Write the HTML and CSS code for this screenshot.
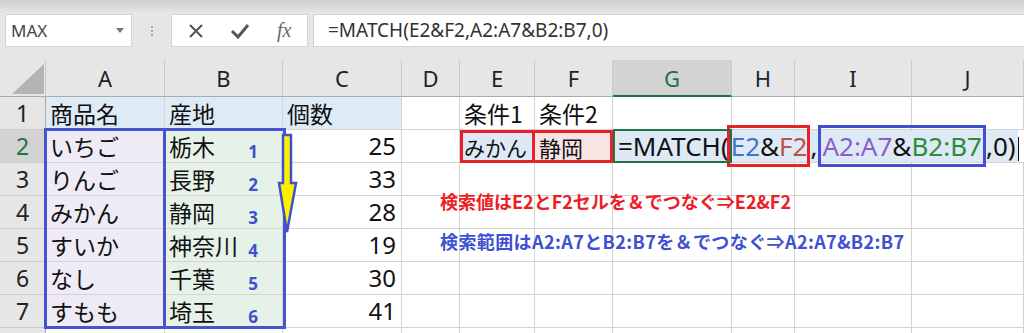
FILE: index.html
```html
<!DOCTYPE html>
<html lang="ja">
<head>
  <meta charset="UTF-8" />
  <meta name="viewport" content="width=device-width, initial-scale=1.0"/>
  <title>MATCH 複数条件</title>
  <link rel="stylesheet" href="styles.css">
</head>
<body>

  <div class="toolbar">
    <div class="bar-row">
      <div class="namebox">
        <span>MAX</span>
        <span class="drop"></span>
      </div>
      <div class="grip"><i></i><i></i><i></i></div>
      <div class="fxbox">
        <svg width="16" height="16" viewBox="0 0 16 16"><path d="M2 2 L14 14 M14 2 L2 14" stroke="#555" stroke-width="2" fill="none"/></svg>
        <svg width="20" height="16" viewBox="0 0 20 16"><path d="M2 8 L8 14 L18 2" stroke="#555" stroke-width="3" fill="none"/></svg>
        <span class="fx">fx</span>
      </div>
      <div class="formula-input">=MATCH(E2&amp;F2,A2:A7&amp;B2:B7,0)</div>
    </div>
  </div>

  <div class="sheet">
    <div class="grid">
      <!-- column headers -->
      <div class="hd corner"></div>
      <div class="hd">A</div>
      <div class="hd">B</div>
      <div class="hd">C</div>
      <div class="hd">D</div>
      <div class="hd">E</div>
      <div class="hd">F</div>
      <div class="hd active-col">G</div>
      <div class="hd">H</div>
      <div class="hd">I</div>
      <div class="hd">J</div>

      <!-- row 1 -->
      <div class="rh">1</div>
      <div class="c head-fill">商品名</div>
      <div class="c head-fill">産地</div>
      <div class="c head-fill">個数</div>
      <div class="c"></div>
      <div class="c">条件1</div>
      <div class="c">条件2</div>
      <div class="c"></div>
      <div class="c"></div>
      <div class="c"></div>
      <div class="c"></div>

      <!-- row 2 -->
      <div class="rh active-row">2</div>
      <div class="c fruit">いちご</div>
      <div class="c area">栃木<b>1</b></div>
      <div class="c num">25</div>
      <div class="c"></div>
      <div class="c cond1">みかん</div>
      <div class="c cond2">静岡</div>
      <div class="c editing">
        <div class="edit-fill">=MATCH(<span class="key"><span class="ref-e">E2</span>&amp;<span class="ref-f">F2</span></span>,<span class="range"><span class="ref-a">A2:A7</span>&amp;<span class="ref-b">B2:B7</span></span>,0)<span class="caret"></span></div>
      </div>

      <!-- row 3 -->
      <div class="rh">3</div>
      <div class="c fruit">りんご</div>
      <div class="c area">長野<b>2</b></div>
      <div class="c num">33</div>
      <div class="c"></div><div class="c"></div><div class="c"></div><div class="c"></div><div class="c"></div><div class="c"></div><div class="c"></div>

      <!-- row 4 -->
      <div class="rh">4</div>
      <div class="c fruit">みかん</div>
      <div class="c area">静岡<b>3</b></div>
      <div class="c num">28</div>
      <div class="c"></div><div class="c"></div><div class="c"></div><div class="c"></div><div class="c"></div><div class="c"></div><div class="c"></div>

      <!-- row 5 -->
      <div class="rh">5</div>
      <div class="c fruit">すいか</div>
      <div class="c area">神奈川<b>4</b></div>
      <div class="c num">19</div>
      <div class="c"></div><div class="c"></div><div class="c"></div><div class="c"></div><div class="c"></div><div class="c"></div><div class="c"></div>

      <!-- row 6 -->
      <div class="rh">6</div>
      <div class="c fruit">なし</div>
      <div class="c area">千葉<b>5</b></div>
      <div class="c num">30</div>
      <div class="c"></div><div class="c"></div><div class="c"></div><div class="c"></div><div class="c"></div><div class="c"></div><div class="c"></div>

      <!-- row 7 -->
      <div class="rh">7</div>
      <div class="c fruit">すもも</div>
      <div class="c area">埼玉<b>6</b></div>
      <div class="c num">41</div>
      <div class="c"></div><div class="c"></div><div class="c"></div><div class="c"></div><div class="c"></div><div class="c"></div><div class="c"></div>

      <!-- row 8 (cut off) -->
      <div class="rh"></div>
      <div class="c"></div><div class="c"></div><div class="c"></div><div class="c"></div><div class="c"></div><div class="c"></div><div class="c"></div><div class="c"></div><div class="c"></div><div class="c"></div>
    </div>

    <!-- drawn shapes on top of the sheet -->
    <div class="range-box"></div>
    <div class="range-split"></div>
    <svg class="arrow" width="22" height="104" viewBox="0 0 22 104">
      <path d="M6 2 H14 V50 H19 L10 99 L2 50 H6 Z" fill="#fff000" stroke="#4050d0" stroke-width="2.5" stroke-linejoin="miter"/>
    </svg>
    <p class="note red">検索値はE2とF2セルを＆でつなぐ⇒E2&amp;F2</p>
    <p class="note blue">検索範囲はA2:A7とB2:B7を＆でつなぐ⇒A2:A7&amp;B2:B7</p>
  </div>

</body>
</html>
```

FILE: styles.css
```css
body {
  margin: 0;
  width: 1024px;
  height: 333px;
  overflow: hidden;
  background: #fff;
  font-family: "Noto Sans", "Noto Sans CJK JP", sans-serif;
}

/* formula bar */
.toolbar {
  height: 60px;
  background: linear-gradient(#cfcfcf 0, #e4e4e4 12px, #e6e6e6 14px);
  box-sizing: border-box;
  padding-top: 14px;
}
.bar-row {
  display: flex;
  height: 33px;
}
.namebox {
  margin-left: 5px;
  width: 127px;
  background: #fff;
  border: 1px solid #d4d4d4;
  box-sizing: border-box;
  display: flex;
  align-items: center;
  justify-content: space-between;
  padding: 0 7px 0 5px;
  font-size: 17px;
  color: #444;
}
.drop {
  width: 0;
  height: 0;
  border-left: 4px solid transparent;
  border-right: 4px solid transparent;
  border-top: 5px solid #777;
}
.grip {
  width: 39px;
  display: flex;
  flex-direction: column;
  align-items: center;
  justify-content: center;
  gap: 2px;
}
.grip i {
  width: 2px;
  height: 2px;
  background: #a8a8a8;
}
.fxbox {
  width: 137px;
  background: #fff;
  border: 1px solid #d4d4d4;
  box-sizing: border-box;
  display: flex;
  align-items: center;
  padding-left: 16px;
  gap: 26px;
}
.fx {
  font-family: "Liberation Serif", serif;
  font-style: italic;
  font-size: 20px;
  color: #666;
  margin-left: 1px;
}
.formula-input {
  flex: 1;
  margin-left: 5px;
  background: #fff;
  border: 1px solid #d4d4d4;
  border-right: none;
  box-sizing: border-box;
  padding-left: 14px;
  font-size: 19px;
  line-height: 31px;
  color: #333;
}

/* sheet */
.sheet {
  position: relative;
}
.grid {
  display: grid;
  grid-template-columns: 46px 119px 118px 119px 58px 75px 78px 119px 63px 117px 1fr;
  grid-template-rows: 37px repeat(7, 33px) 20px;
}
.hd {
  background: #e6e6e6;
  border-right: 1px solid #cacaca;
  border-bottom: 1px solid #ababab;
  box-sizing: border-box;
  text-align: center;
  font-size: 22px;
  line-height: 36px;
  color: #222;
}
.corner {
  position: relative;
}
.corner::after {
  content: "";
  position: absolute;
  left: 12px;
  top: 4px;
  width: 32px;
  height: 30px;
  background: #b4b4b4;
  clip-path: polygon(100% 0, 100% 100%, 0 100%);
}
.active-col {
  background: #d3d3d3;
  color: #217346;
  border-bottom: 2px solid #217346;
}
.rh {
  background: #e6e6e6;
  border-right: 1px solid #ababab;
  border-bottom: 1px solid #cacaca;
  box-sizing: border-box;
  text-align: center;
  font-size: 23px;
  line-height: 32px;
  color: #222;
}
.active-row {
  background: #d3d3d3;
  color: #217346;
}
.c {
  border-right: 1px solid #d4d4d4;
  border-bottom: 1px solid #d4d4d4;
  box-sizing: border-box;
  font-family: "Noto Sans CJK JP", sans-serif;
  font-size: 23px;
  line-height: 32px;
  padding-left: 4px;
  color: #111;
  white-space: nowrap;
}
.head-fill {
  background: #ddebf7;
}
.fruit {
  background: #eeebf7;
}
.area {
  background: #e6f1e7;
  display: flex;
  justify-content: space-between;
  padding-right: 24px;
}
.area b {
  font-family: "Noto Sans", sans-serif;
  font-size: 17px;
  color: #4050d0;
  padding-top: 6px;
}
.num {
  text-align: right;
  padding-right: 5px;
  font-family: "Noto Sans", sans-serif;
  font-size: 24px;
}
.cond1 {
  background: #dde9f6;
  border: 3px solid #e8202a;
  padding-left: 1px;
  font-size: 21px;
  line-height: 28px;
  overflow: hidden;
}
.cond2 {
  background: #f9e4e4;
  border: 3px solid #e8202a;
  border-left: none;
  padding-left: 4px;
  font-size: 22px;
  line-height: 28px;
}
.editing {
  grid-column: span 4;
  position: relative;
  padding-left: 0;
  padding-right: 6px;
  border-right: none;
}
.editing::before {
  content: "";
  position: absolute;
  left: 0;
  top: -1px;
  width: 119px;
  height: 34px;
  box-sizing: border-box;
  border: 2px solid #217346;
}
.edit-fill {
  background: #dde9f5;
  height: 32px;
  padding-left: 5px;
  font-family: "Noto Sans", sans-serif;
  font-size: 26px;
  line-height: 32px;
  color: #111;
}
.key {
  border: 3px solid #e8202a;
  margin-left: -2px;
  padding: 0 0 0 1px;
}
.range {
  border: 3px solid #4050d0;
  margin-left: 1px;
  padding: 0 1px;
}
.ref-e { color: #4472c4; }
.ref-f { color: #c0504d; }
.ref-a { color: #8a5fc7; }
.ref-b { color: #2e8b3a; }
.caret {
  display: inline-block;
  width: 1px;
  height: 24px;
  background: #111;
  vertical-align: middle;
  margin-left: 2px;
}

/* shapes and text boxes */
.range-box {
  position: absolute;
  left: 44px;
  top: 68px;
  width: 242px;
  height: 201px;
  border: 3px solid #4654d0;
  box-sizing: border-box;
}
.range-split {
  position: absolute;
  left: 163px;
  top: 68px;
  width: 3px;
  height: 201px;
  background: #4654d0;
}
.arrow {
  position: absolute;
  left: 277px;
  top: 73px;
}
.note {
  position: absolute;
  left: 440px;
  margin: 0;
  font-family: "Noto Sans CJK JP", sans-serif;
  font-weight: bold;
  font-size: 18px;
  line-height: 24px;
  white-space: nowrap;
}
.red {
  top: 129px;
  color: #ee1c25;
}
.blue {
  top: 169px;
  color: #4050d0;
  letter-spacing: 0.4px;
}
```
